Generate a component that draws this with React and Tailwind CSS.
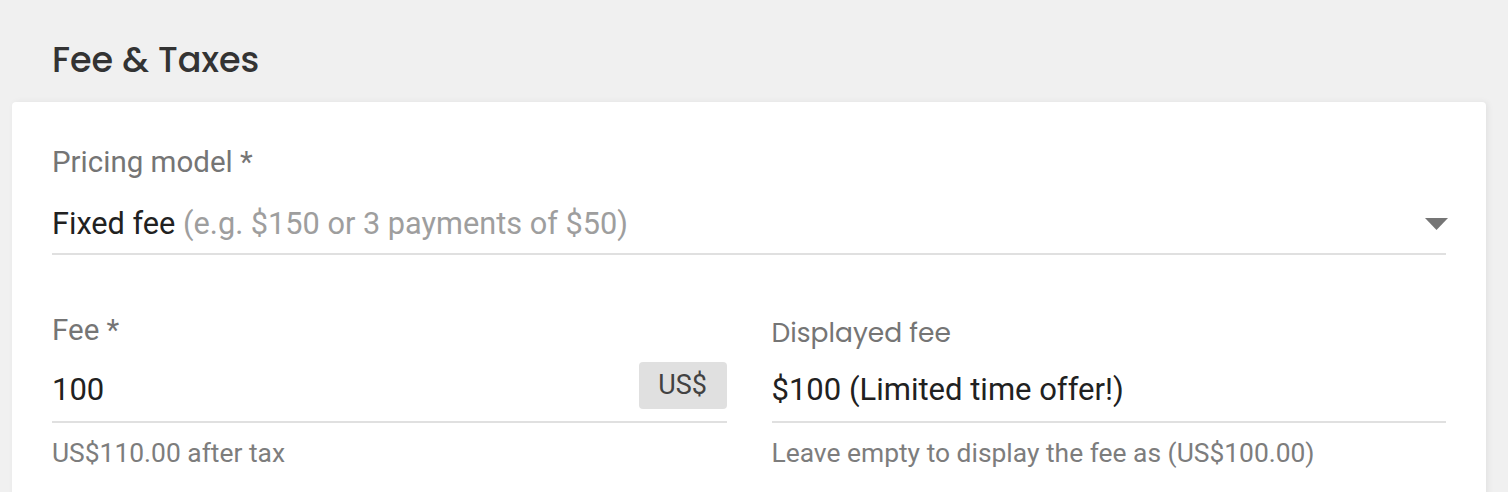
import React from 'react';

// Underlined text field with label and optional helper text
const Field = ({ label, labelPoppins, children, helper, adornment }) => (
    <div className="flex flex-col">
        <div
            className={
                labelPoppins
                    ? "pt-[3px] h-[36px] font-['Poppins',sans-serif] text-[26.5px] leading-[36px] text-[#757575]"
                    : 'text-[29.5px] leading-[36px] text-[#757575]'
            }
        >
            {label}
        </div>
        <div className="mt-[14px] flex h-[47px] items-end justify-between">
            <div className="pb-[1px] text-[31px] leading-[36px] text-[#212121]">{children}</div>
            {adornment}
        </div>
        <div className="mt-[12px] h-[2px] bg-[#e0e0e0]" />
        {helper && (
            <div className="mt-[13px] text-[26.4px] leading-[34px] text-[#7d7d7d]">{helper}</div>
        )}
    </div>
);

export default function App() {
    return (
        <div className="min-h-[492px] w-full bg-[#f0f0f0] pt-[40px] font-['Roboto',sans-serif]">
            {/* Section title */}
            <h2 className="pl-[52px] font-['Poppins',sans-serif] text-[35px] font-medium leading-[40px] text-[#333333]">
                Fee &amp; Taxes
            </h2>

            {/* Card */}
            <div className="ml-[12px] mt-[22px] w-[1474px] rounded-[4px] bg-white px-[40px] pb-[40px] pt-[42px] shadow-[2px_0_6px_rgba(0,0,0,0.06)]">
                {/* Pricing model select */}
                <div className="text-[29.5px] leading-[36px] text-[#757575]">Pricing model *</div>
                <div className="mt-[24px] flex h-[40px] items-center justify-between">
                    <div className="text-[30.7px] leading-[36px]">
                        <span className="text-[#212121]">Fixed fee</span>{' '}
                        <span className="text-[#9e9e9e]">(e.g. $150 or 3 payments of $50)</span>
                    </div>
                    <svg width="23" height="12" viewBox="0 0 23 12" className="mr-[-2px]">
                        <path d="M0 0 H23 L11.5 12 Z" fill="#757575" />
                    </svg>
                </div>
                <div className="mt-[9px] h-[2px] bg-[#e0e0e0]" />

                {/* Fee + displayed fee */}
                <div className="mt-[57px] grid grid-cols-2 gap-x-[45px]">
                    <Field
                        label="Fee *"
                        helper="US$110.00 after tax"
                        adornment={
                            <div className="flex h-[47px] w-[88px] items-center justify-center rounded-[4px] bg-[#e0e0e0] text-[27px] text-[#424242]">
                                US$
                            </div>
                        }
                    >
                        100
                    </Field>
                    <Field
                        label="Displayed fee"
                        labelPoppins
                        helper="Leave empty to display the fee as (US$100.00)"
                    >
                        $100 (Limited time offer!)
                    </Field>
                </div>
            </div>
        </div>
    );
}
